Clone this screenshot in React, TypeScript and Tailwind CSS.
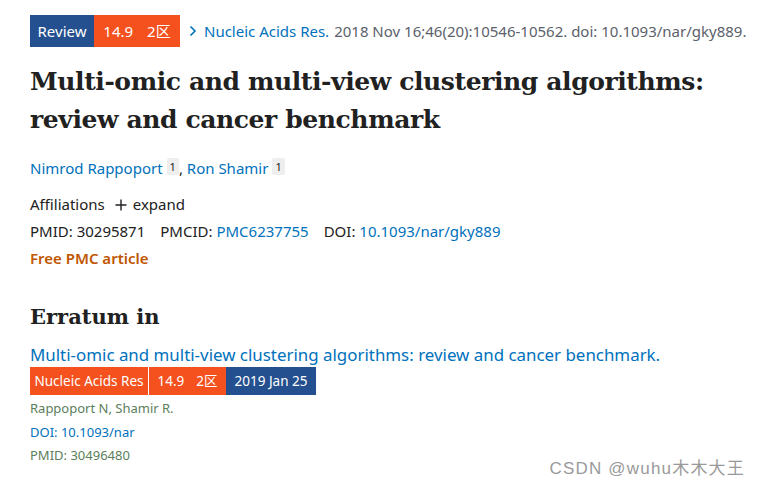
import React from 'react';

const sans = "font-['Noto_Sans','Noto_Sans_CJK_SC',sans-serif]";

function Sup() {
  return (
    <sup className="ml-[4px] relative -top-[3px] rounded-[2px] bg-[#eeeeee] px-[3px] py-[1px] text-[11px] leading-none text-[#212121]">
      1
    </sup>
  );
}

export default function App() {
  return (
    <div className={`relative h-[490px] w-[760px] overflow-hidden bg-white ${sans}`}>
      <div className="px-[30px] pt-[15px]">
        {/* Journal badge row */}
        <div className="flex h-[32px] items-center text-[15px] whitespace-nowrap">
          <span className="flex h-full w-[64px] shrink-0 items-center justify-center bg-[#24508f] text-white">Review</span>
          <span className="flex h-full w-[86px] shrink-0 items-center justify-center gap-[14px] bg-[#f4511e] text-white">
            <span>14.9</span>
            <span>2区</span>
          </span>
          <svg className="ml-[9px] mr-[7px] shrink-0" width="8" height="12" viewBox="0 0 8 12" fill="none">
            <path d="M1.5 1.5 L6 6 L1.5 10.5" stroke="#0071bc" strokeWidth="1.6" />
          </svg>
          <span className="text-[#0071bc]">Nucleic Acids Res.</span>
          <span className="ml-[5px] text-[#5b616b]">2018 Nov 16;46(20):10546-10562. doi: 10.1093/nar/gky889.</span>
        </div>

        {/* Title */}
        <h1 className="mt-[16px] whitespace-nowrap font-['DejaVu_Serif',serif] text-[25px] leading-[38px] font-bold tracking-[-0.4px] text-[#212121]">
          Multi-omic and multi-view clustering algorithms:
          <br />
          review and cancer benchmark
        </h1>

        {/* Authors */}
        <div className="mt-[17px] text-[15px] leading-[24px] text-[#0071bc]">
          Nimrod Rappoport<Sup />
          <span className="text-[#212121]">,</span> Ron Shamir<Sup />
        </div>

        <div className="mt-[11px] text-[15px] leading-[27px] text-[#212121]">
          <div className="flex items-center">
            <span>Affiliations</span>
            <svg className="ml-[10px] mr-[6px]" width="12" height="12" viewBox="0 0 12 12">
              <path d="M6 0.5 V11.5 M0.5 6 H11.5" stroke="#212121" strokeWidth="1.4" />
            </svg>
            <span>expand</span>
          </div>
          <div className="flex gap-[15px]">
            <span>PMID: 30295871</span>
            <span>
              PMCID: <span className="text-[#0071bc]">PMC6237755</span>
            </span>
            <span>
              DOI: <span className="text-[#0071bc]">10.1093/nar/gky889</span>
            </span>
          </div>
          <div className="font-semibold text-[#c05600]">Free PMC article</div>
        </div>

        {/* Erratum */}
        <h2 className="mt-[30px] font-['DejaVu_Serif',serif] text-[21px] leading-[30px] font-bold text-[#212121]">
          Erratum in
        </h2>
        <div className="mt-[11px] whitespace-nowrap text-[16.9px] leading-[24px] text-[#0071bc]">
          Multi-omic and multi-view clustering algorithms: review and cancer benchmark.
        </div>
        <div className="flex h-[28px] items-center text-[13.5px] text-white whitespace-nowrap">
          <span className="flex h-full w-[118px] items-center justify-center bg-[#f4511e]">Nucleic Acids Res</span>
          <span className="h-full w-px bg-white" />
          <span className="flex h-full w-[77px] items-center justify-center gap-[12px] bg-[#f4511e]">
            <span>14.9</span>
            <span>2区</span>
          </span>
          <span className="flex h-full w-[90px] items-center justify-center bg-[#24508f]">2019 Jan 25</span>
        </div>
        <div className="mt-[2px] text-[13px] leading-[23.5px]">
          <div className="text-[#5b7e5b]">Rappoport N, Shamir R.</div>
          <div className="text-[#0071bc]">DOI: 10.1093/nar</div>
          <div className="text-[#5b7e5b]">PMID: 30496480</div>
        </div>
      </div>

      {/* Watermark */}
      <div className="absolute right-[15px] bottom-[9px] font-['Liberation_Sans','Noto_Sans_CJK_SC',sans-serif] text-[17px] tracking-[1.2px] text-[#9a9a9a]">
        CSDN @wuhu木木大王
      </div>
    </div>
  );
}
